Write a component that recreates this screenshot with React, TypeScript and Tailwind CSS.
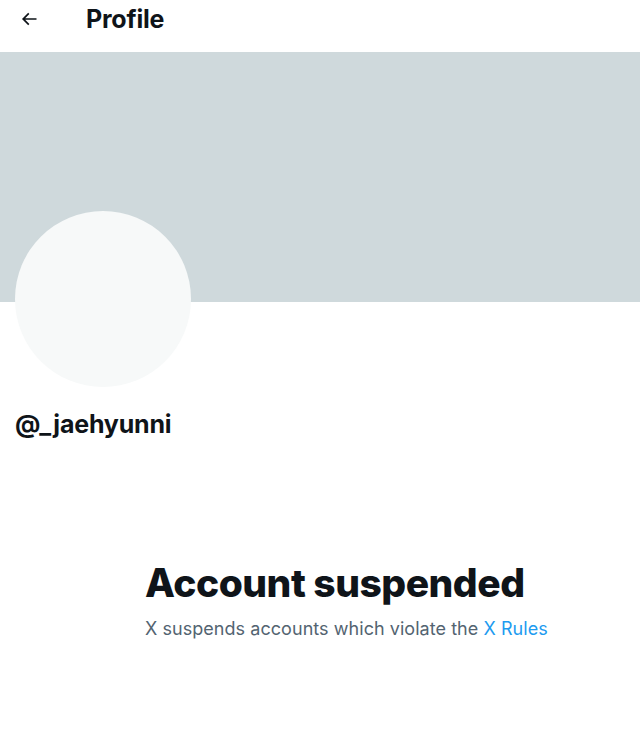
export default function App() {
  return (
    <div className="w-[640px] h-[750px] bg-white overflow-hidden font-['Inter',sans-serif] text-[#0f1419]">
      <div className="h-[52px] flex items-start pt-[4px]">
        <svg viewBox="0 0 24 24" className="w-[20px] h-[20px] ml-[19px] mt-[5px]" fill="#0f1419">
          <path d="M7.414 13l5.043 5.04-1.414 1.42L3.586 12l7.457-7.46 1.414 1.42L7.414 11H21v2H7.414z" />
        </svg>
        <h1 className="ml-[47px] text-[25px] leading-[30px] font-bold tracking-[-0.2px]">Profile</h1>
      </div>
      <div className="h-[250px] bg-[#cfd9dc]" />
      <div className="px-[15px]">
        <div className="-mt-[91px] w-[176px] h-[176px] rounded-full bg-[#f7f9f9]" />
        <div className="mt-[22px] text-[25px] leading-[30px] font-bold tracking-[-0.2px]">@_jaehyunni</div>
      </div>
      <div className="mt-[122px] pl-[145px]">
        <h2 className="text-[39px] font-extrabold leading-[44px] tracking-[-0.5px]">Account suspended</h2>
        <p className="mt-[12px] text-[18px] leading-[24px] text-[#536471] tracking-[0.05px]">
          X suspends accounts which violate the <span className="text-[#1d9bf0]">X Rules</span>
        </p>
      </div>
    </div>
  );
}
